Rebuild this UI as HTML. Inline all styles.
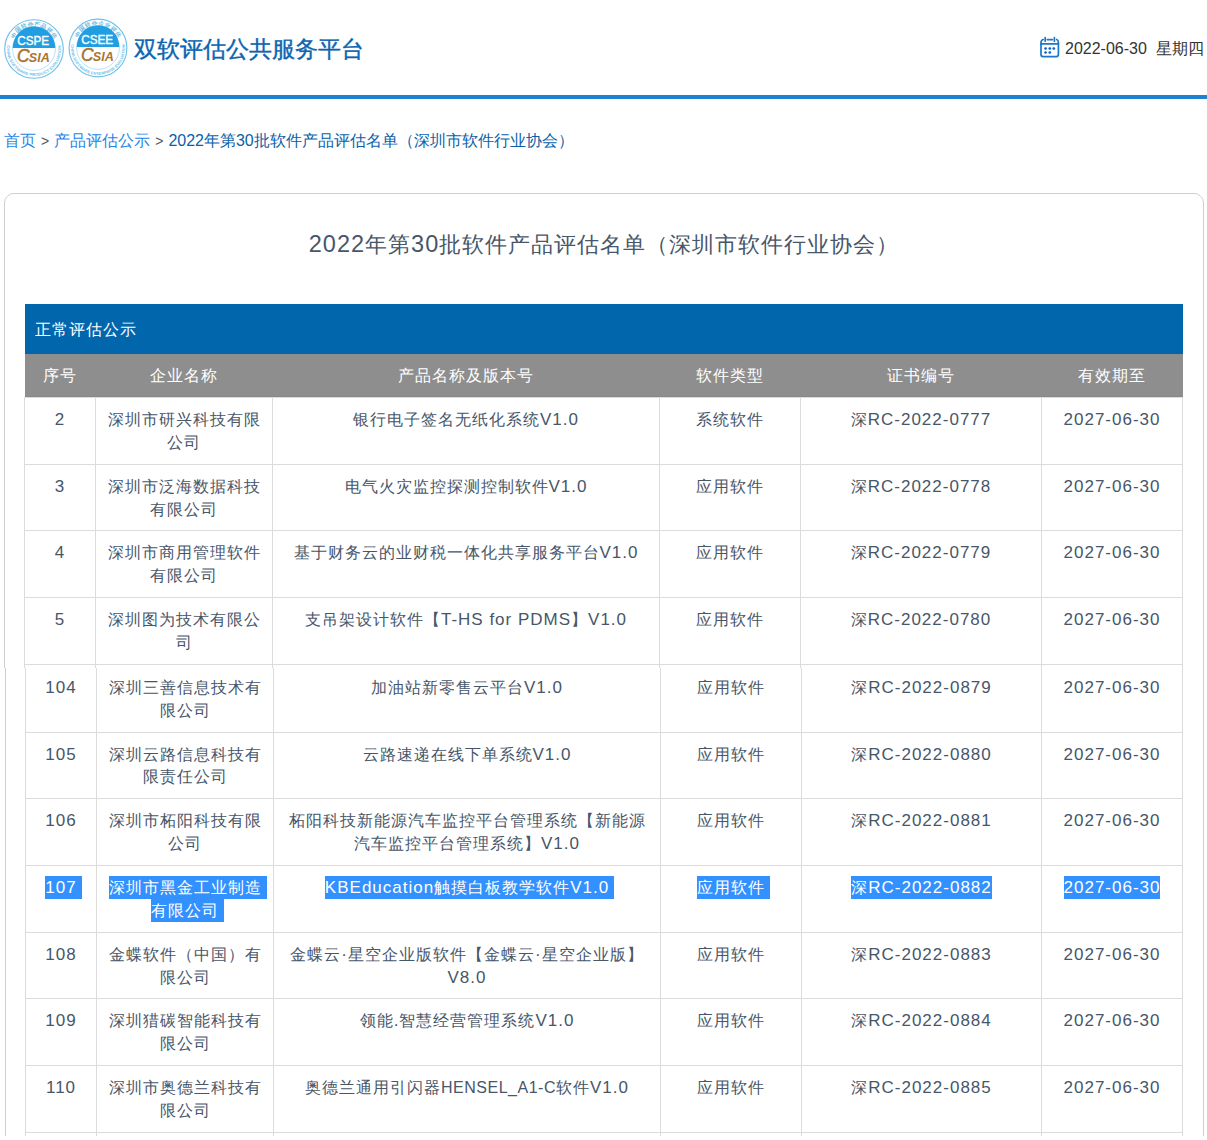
<!DOCTYPE html>
<html><head><meta charset="utf-8">
<style>
*{box-sizing:border-box}
html,body{margin:0;padding:0;background:#fff}
body{width:1207px;height:1140px;overflow:hidden;position:relative;font-family:"Liberation Sans",sans-serif;color:#333}
.abs{position:absolute}
#sitetitle{left:134px;top:34px;font-size:23px;line-height:30px;color:#0c65b0;-webkit-text-stroke:0.4px #0c65b0;white-space:nowrap}
#date{left:1065px;top:39px;font-size:16px;line-height:20px;color:#333;white-space:nowrap}
#topline{left:0;top:95px;width:1207px;height:4px;background:#1e82d0}
#crumb{left:4px;top:130px;font-size:16px;line-height:22px;white-space:nowrap;color:#333}
#crumb a{color:#1f86e6;text-decoration:none}
#crumb .cur{color:#0b5fa9}
#crumb .gt{color:#555;margin:0 5px 0 5px;font-size:14px}
#card{left:4px;top:193px;width:1200px;height:1000px;border:1px solid #cfcfcf;border-radius:10px}
#ctitle{left:0;top:230px;width:1207px;text-align:center;font-size:22px;line-height:30px;color:#475669;white-space:nowrap;padding-left:1px;letter-spacing:1px}
.t2{font-size:23.5px;line-height:0}
#bluebar{left:25px;top:304px;width:1158px;height:50px;background:#0266ad;color:#fff;font-size:16px;line-height:52px;padding-left:10px;letter-spacing:1px}
#ghead{left:25px;top:354px;width:1158px;height:43px;background:#8e8e8e;box-shadow:inset 0 -1px 0 #888;color:#fff;font-size:16px;letter-spacing:1px}
#ghead div{position:absolute;top:0;height:43px;line-height:43px;text-align:center}
.tbl{border-collapse:collapse;table-layout:fixed;width:1158px}
#lower{left:0;top:668px;width:1207px;height:468px;overflow:hidden;background:#fff}
#card2{left:5px;top:-400px;width:1199px;height:1000px;border:1px solid #cfcfcf;border-radius:10px}
.tbl td{border:1px solid #dcdcdc;padding:11px 10px 9px;font-size:16px;line-height:22.86px;letter-spacing:1px;color:#475669;text-align:center;vertical-align:top;}
.l{font-size:17px;line-height:0}
.lc{font-size:16px;letter-spacing:0.5px}
.sel{background:#3390ff;color:#fff;display:inline-block;line-height:22.86px;height:22.86px;vertical-align:top;padding-right:5px;margin-right:-5px;position:relative;top:-1px;padding-top:1px}
.sel.np{padding-right:0;margin-right:0}
</style></head><body>

<svg id="logo1" class="abs" viewBox="-31 -31 62 62" style="left:3px;top:18px;width:62px;height:62px">
 <defs><path id="p1-up" d="M-22.02 -5.90 A22.8 22.8 0 0 1 22.02 -5.90"/><path id="p1-dn" d="M-26.41 -5.61 A27 27 0 1 0 26.41 -5.61"/></defs>
 <circle cx="0" cy="0" r="29.3" fill="#fff" stroke="#6cc0e8" stroke-width="1.1"/>
 <circle cx="0" cy="0" r="21.4" fill="#fff" stroke="#9ad5f0" stroke-width="0.7"/>
 <path d="M-21.3 -1 A21.3 21.8 0 0 1 21.3 -1 Z" fill="#1f9ee2"/>
 <text font-family="Liberation Sans" font-size="5.8" fill="#5ab6e5" stroke="#5ab6e5" stroke-width="0.15"><textPath href="#p1-up" startOffset="50%" text-anchor="middle" textLength="50" lengthAdjust="spacing">中国软件产品评估</textPath></text>
 <text font-family="Liberation Sans" font-size="3.9" fill="#72c2ea" font-weight="bold"><textPath href="#p1-dn" startOffset="50%" text-anchor="middle" textLength="92" lengthAdjust="spacingAndGlyphs">CHINA SOFTWARE PRODUCT EVALUATION</textPath></text>
 <text x="-0.8" y="-4.0" font-family="Liberation Sans" font-size="12" fill="#fff" stroke="#fff" stroke-width="0.35" text-anchor="middle" textLength="32" lengthAdjust="spacingAndGlyphs">CSPE</text>
 <text x="-17" y="12.8" font-family="Liberation Sans" font-style="italic" font-size="17.5" fill="#a9742f" textLength="12.5" lengthAdjust="spacingAndGlyphs" stroke="#a9742f" stroke-width="0.5">C</text>
 <text x="-5.2" y="12.6" font-family="Liberation Sans" font-style="italic" font-weight="bold" font-size="13" fill="#a9742f" textLength="21" lengthAdjust="spacingAndGlyphs">SIA</text>
</svg>
<svg id="logo2" class="abs" viewBox="-31 -31 62 62" style="left:67px;top:17px;width:62px;height:62px">
 <defs><path id="p2-up" d="M-22.02 -5.90 A22.8 22.8 0 0 1 22.02 -5.90"/><path id="p2-dn" d="M-26.41 -5.61 A27 27 0 1 0 26.41 -5.61"/></defs>
 <circle cx="0" cy="0" r="28.9" fill="#fff" stroke="#6cc0e8" stroke-width="1.1"/>
 <circle cx="0" cy="0" r="21.4" fill="#fff" stroke="#9ad5f0" stroke-width="0.7"/>
 <path d="M-21.3 -1 A21.3 21.8 0 0 1 21.3 -1 Z" fill="#1f9ee2"/>
 <text font-family="Liberation Sans" font-size="5.8" fill="#5ab6e5" stroke="#5ab6e5" stroke-width="0.15"><textPath href="#p2-up" startOffset="50%" text-anchor="middle" textLength="50" lengthAdjust="spacing">中国软件企业评估</textPath></text>
 <text font-family="Liberation Sans" font-size="3.9" fill="#72c2ea" font-weight="bold"><textPath href="#p2-dn" startOffset="50%" text-anchor="middle" textLength="92" lengthAdjust="spacingAndGlyphs">CHINA SOFTWARE ENTERPRISE EVALUATION</textPath></text>
 <text x="-0.8" y="-4.0" font-family="Liberation Sans" font-size="12" fill="#fff" stroke="#fff" stroke-width="0.35" text-anchor="middle" textLength="32" lengthAdjust="spacingAndGlyphs">CSEE</text>
 <text x="-17" y="12.8" font-family="Liberation Sans" font-style="italic" font-size="17.5" fill="#a9742f" textLength="12.5" lengthAdjust="spacingAndGlyphs" stroke="#a9742f" stroke-width="0.5">C</text>
 <text x="-5.2" y="12.6" font-family="Liberation Sans" font-style="italic" font-weight="bold" font-size="13" fill="#a9742f" textLength="21" lengthAdjust="spacingAndGlyphs">SIA</text>
</svg>

<div id="sitetitle" class="abs">双软评估公共服务平台</div>

<svg id="cal" class="abs" viewBox="0 0 28 28" style="left:1036px;top:33px;width:28px;height:28px">
 <g fill="none" stroke="#1a78cc" stroke-width="1.7" stroke-linecap="round">
  <path d="M7.2 6.5 Q5 7.2 5 9.5 L5 21.6 Q5 23.6 7 23.6 L20.4 23.6 Q22.4 23.6 22.4 21.6 L22.4 9.5 Q22.4 7.2 20.8 6.5"/>
  <path d="M11.3 6.6 L16.4 6.6"/>
  <path d="M9.2 4.6 L9.2 8.2 M18.4 4.6 L18.4 8.2"/>
  <path d="M5 10.8 L22.4 10.8"/>
 </g>
 <g fill="#0a62c0"><circle cx="9.6" cy="15.5" r="1.35"/><circle cx="13.8" cy="15.5" r="1.35"/><circle cx="17.8" cy="15.5" r="1.35"/><circle cx="9.6" cy="19.5" r="1.35"/><circle cx="13.8" cy="19.5" r="1.35"/></g>
</svg>
<div id="date" class="abs">2022-06-30&nbsp;&nbsp;星期四</div>

<div id="topline" class="abs"></div>

<div id="crumb" class="abs"><a>首页</a><span class="gt">&gt;</span><a>产品评估公示</a><span class="gt">&gt;</span><span class="cur">2022年第30批软件产品评估名单（深圳市软件行业协会）</span></div>

<div id="card" class="abs"></div>
<div id="ctitle" class="abs"><span class="t2">2022</span>年第<span class="t2">30</span>批软件产品评估名单（深圳市软件行业协会）</div>

<div id="bluebar" class="abs">正常评估公示</div>
<div id="ghead" class="abs">
 <div style="left:0;width:70px">序号</div>
 <div style="left:70px;width:177px">企业名称</div>
 <div style="left:247px;width:387px">产品名称及版本号</div>
 <div style="left:634px;width:141px">软件类型</div>
 <div style="left:775px;width:241px">证书编号</div>
 <div style="left:1016px;width:142px">有效期至</div>
</div>

<table id="tblA" class="abs tbl" style="left:24px;top:397px">
<colgroup><col style="width:71px"><col style="width:177px"><col style="width:387px"><col style="width:141px"><col style="width:241px"><col style="width:141px"></colgroup>
<tbody>
<tr><td><span class="l">2</span></td><td>深圳市研兴科技有限公司</td><td>银行电子签名无纸化系统<span class="l">V1.0</span></td><td>系统软件</td><td>深<span class="l">RC-2022-0777</span></td><td><span class="l">2027-06-30</span></td></tr>
<tr><td><span class="l">3</span></td><td>深圳市泛海数据科技有限公司</td><td>电气火灾监控探测控制软件<span class="l">V1.0</span></td><td>应用软件</td><td>深<span class="l">RC-2022-0778</span></td><td><span class="l">2027-06-30</span></td></tr>
<tr><td><span class="l">4</span></td><td>深圳市商用管理软件有限公司</td><td>基于财务云的业财税一体化共享服务平台<span class="l">V1.0</span></td><td>应用软件</td><td>深<span class="l">RC-2022-0779</span></td><td><span class="l">2027-06-30</span></td></tr>
<tr><td><span class="l">5</span></td><td>深圳图为技术有限公司</td><td>支吊架设计软件【<span class="l">T-HS for PDMS</span>】<span class="l">V1.0</span></td><td>应用软件</td><td>深<span class="l">RC-2022-0780</span></td><td><span class="l">2027-06-30</span></td></tr>
<tr><td><span class="l">104</span></td><td>深圳三善信息技术有限公司</td><td>加油站新零售云平台<span class="l">V1.0</span></td><td>应用软件</td><td>深<span class="l">RC-2022-0879</span></td><td><span class="l">2027-06-30</span></td></tr>
<tr><td><span class="l">105</span></td><td>深圳云路信息科技有限责任公司</td><td>云路速递在线下单系统<span class="l">V1.0</span></td><td>应用软件</td><td>深<span class="l">RC-2022-0880</span></td><td><span class="l">2027-06-30</span></td></tr>
<tr><td><span class="l">106</span></td><td>深圳市柘阳科技有限公司</td><td>柘阳科技新能源汽车监控平台管理系统【新能源汽车监控平台管理系统】<span class="l">V1.0</span></td><td>应用软件</td><td>深<span class="l">RC-2022-0881</span></td><td><span class="l">2027-06-30</span></td></tr>
<tr class="hl"><td><span class="sel"><span class="l">107</span></span></td><td><span class="sel">深圳市黑金工业制造</span><br><span class="sel">有限公司</span></td><td><span class="sel"><span class="l">KBEducation</span>触摸白板教学软件<span class="l">V1.0</span></span></td><td><span class="sel">应用软件</span></td><td><span class="sel np">深<span class="l">RC-2022-0882</span></span></td><td><span class="sel np"><span class="l">2027-06-30</span></span></td></tr>
<tr><td><span class="l">108</span></td><td>金蝶软件（中国）有限公司</td><td>金蝶云<span class="l">·</span>星空企业版软件【金蝶云<span class="l">·</span>星空企业版】<span class="l">V8.0</span></td><td>应用软件</td><td>深<span class="l">RC-2022-0883</span></td><td><span class="l">2027-06-30</span></td></tr>
<tr><td><span class="l">109</span></td><td>深圳猎碳智能科技有限公司</td><td>领能<span class="l">.</span>智慧经营管理系统<span class="l">V1.0</span></td><td>应用软件</td><td>深<span class="l">RC-2022-0884</span></td><td><span class="l">2027-06-30</span></td></tr>
<tr><td><span class="l">110</span></td><td>深圳市奥德兰科技有限公司</td><td>奥德兰通用引闪器<span class="lc">HENSEL_A1-C</span>软件<span class="l">V1.0</span></td><td>应用软件</td><td>深<span class="l">RC-2022-0885</span></td><td><span class="l">2027-06-30</span></td></tr>
<tr><td><span class="l">111</span></td><td>深圳市某某科技有限公司</td><td>某某软件<span class="l">V1.0</span></td><td>应用软件</td><td>深<span class="l">RC-2022-0886</span></td><td><span class="l">2027-06-30</span></td></tr>
</tbody>
</table>
<div id="lower" class="abs">
 <div id="card2" class="abs"></div>
 <table id="tblB" class="abs tbl" style="left:25px;top:-270px;width:1157px">
<colgroup><col style="width:71px"><col style="width:177px"><col style="width:387px"><col style="width:141px"><col style="width:240px"><col style="width:141px"></colgroup>
<tbody>
<tr><td><span class="l">2</span></td><td>深圳市研兴科技有限公司</td><td>银行电子签名无纸化系统<span class="l">V1.0</span></td><td>系统软件</td><td>深<span class="l">RC-2022-0777</span></td><td><span class="l">2027-06-30</span></td></tr>
<tr><td><span class="l">3</span></td><td>深圳市泛海数据科技有限公司</td><td>电气火灾监控探测控制软件<span class="l">V1.0</span></td><td>应用软件</td><td>深<span class="l">RC-2022-0778</span></td><td><span class="l">2027-06-30</span></td></tr>
<tr><td><span class="l">4</span></td><td>深圳市商用管理软件有限公司</td><td>基于财务云的业财税一体化共享服务平台<span class="l">V1.0</span></td><td>应用软件</td><td>深<span class="l">RC-2022-0779</span></td><td><span class="l">2027-06-30</span></td></tr>
<tr><td><span class="l">5</span></td><td>深圳图为技术有限公司</td><td>支吊架设计软件【<span class="l">T-HS for PDMS</span>】<span class="l">V1.0</span></td><td>应用软件</td><td>深<span class="l">RC-2022-0780</span></td><td><span class="l">2027-06-30</span></td></tr>
<tr><td><span class="l">104</span></td><td>深圳三善信息技术有限公司</td><td>加油站新零售云平台<span class="l">V1.0</span></td><td>应用软件</td><td>深<span class="l">RC-2022-0879</span></td><td><span class="l">2027-06-30</span></td></tr>
<tr><td><span class="l">105</span></td><td>深圳云路信息科技有限责任公司</td><td>云路速递在线下单系统<span class="l">V1.0</span></td><td>应用软件</td><td>深<span class="l">RC-2022-0880</span></td><td><span class="l">2027-06-30</span></td></tr>
<tr><td><span class="l">106</span></td><td>深圳市柘阳科技有限公司</td><td>柘阳科技新能源汽车监控平台管理系统【新能源汽车监控平台管理系统】<span class="l">V1.0</span></td><td>应用软件</td><td>深<span class="l">RC-2022-0881</span></td><td><span class="l">2027-06-30</span></td></tr>
<tr class="hl"><td><span class="sel"><span class="l">107</span></span></td><td><span class="sel">深圳市黑金工业制造</span><br><span class="sel">有限公司</span></td><td><span class="sel"><span class="l">KBEducation</span>触摸白板教学软件<span class="l">V1.0</span></span></td><td><span class="sel">应用软件</span></td><td><span class="sel np">深<span class="l">RC-2022-0882</span></span></td><td><span class="sel np"><span class="l">2027-06-30</span></span></td></tr>
<tr><td><span class="l">108</span></td><td>金蝶软件（中国）有限公司</td><td>金蝶云<span class="l">·</span>星空企业版软件【金蝶云<span class="l">·</span>星空企业版】<span class="l">V8.0</span></td><td>应用软件</td><td>深<span class="l">RC-2022-0883</span></td><td><span class="l">2027-06-30</span></td></tr>
<tr><td><span class="l">109</span></td><td>深圳猎碳智能科技有限公司</td><td>领能<span class="l">.</span>智慧经营管理系统<span class="l">V1.0</span></td><td>应用软件</td><td>深<span class="l">RC-2022-0884</span></td><td><span class="l">2027-06-30</span></td></tr>
<tr><td><span class="l">110</span></td><td>深圳市奥德兰科技有限公司</td><td>奥德兰通用引闪器<span class="lc">HENSEL_A1-C</span>软件<span class="l">V1.0</span></td><td>应用软件</td><td>深<span class="l">RC-2022-0885</span></td><td><span class="l">2027-06-30</span></td></tr>
<tr><td><span class="l">111</span></td><td>深圳市某某科技有限公司</td><td>某某软件<span class="l">V1.0</span></td><td>应用软件</td><td>深<span class="l">RC-2022-0886</span></td><td><span class="l">2027-06-30</span></td></tr>
</tbody>
</table>
</div>

<div class="abs" style="left:0;top:1136px;width:1207px;height:4px;background:#fff"></div>
</body></html>
